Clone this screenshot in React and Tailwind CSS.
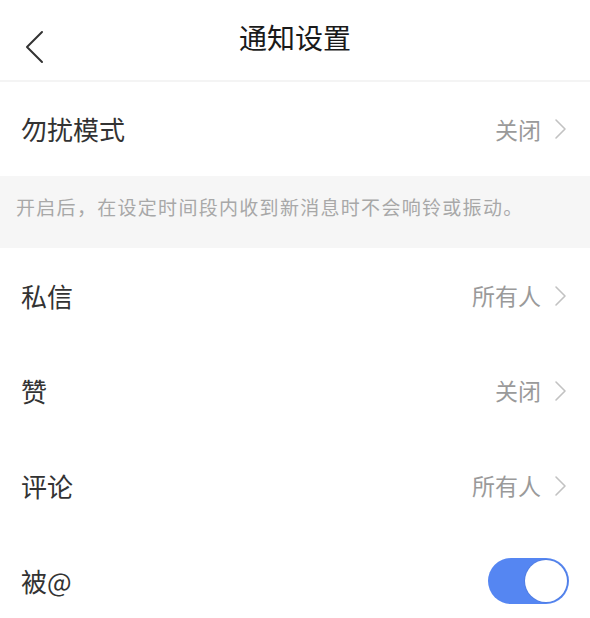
import React from "react";

const Chevron = () => (
  <svg width="14" height="22" viewBox="0 0 14 22" className="ml-[13px]">
    <path d="M2 2 L11 11 L2 20" fill="none" stroke="#c2c2c2" strokeWidth="1.6" strokeLinecap="round" strokeLinejoin="round" />
  </svg>
);

const Row = ({ label, value, children }) => (
  <div className="h-[95px] flex items-center justify-between pl-[21px] pr-[22px] bg-white">
    <span className="text-[26px] text-[#333] leading-none">{label}</span>
    {children ? (
      children
    ) : (
      <div className="flex items-center">
        <span className="text-[23px] text-[#9a9a9a] leading-none">{value}</span>
        <Chevron />
      </div>
    )}
  </div>
);

export default function App() {
  return (
    <div
      className="w-[590px] h-[618px] bg-white overflow-hidden"
      style={{ fontFamily: '"Noto Sans CJK SC", "Noto Sans", sans-serif' }}
    >
      <div className="h-[82px] relative flex items-center justify-center border-b-2 border-[#f4f4f4]">
        <svg width="22" height="34" viewBox="0 0 22 34" className="absolute left-[24px] top-[30px]">
          <path d="M18 2 L3 17 L18 32" fill="none" stroke="#333" strokeWidth="2" strokeLinecap="round" strokeLinejoin="round" />
        </svg>
        <span className="text-[28px] text-[#1a1a1a] leading-none -mt-[6px]">通知设置</span>
      </div>
      <div className="h-[94px] flex items-center justify-between pl-[21px] pr-[22px]">
        <span className="text-[26px] text-[#333] leading-none">勿扰模式</span>
        <div className="flex items-center">
          <span className="text-[23px] text-[#9a9a9a] leading-none">关闭</span>
          <Chevron />
        </div>
      </div>
      <div className="h-[72px] bg-[#f6f6f6] pl-[16px] pt-[19px]">
        <p className="text-[19px] tracking-[1.3px] text-[#a8a8a8] leading-[24px] whitespace-nowrap">
          开启后，在设定时间段内收到新消息时不会响铃或振动。
        </p>
      </div>
      <Row label="私信" value="所有人" />
      <Row label="赞" value="关闭" />
      <Row label="评论" value="所有人" />
      <Row label="被@">
        <div className="w-[81px] h-[46px] rounded-full bg-[#5586f2] flex items-center justify-end pr-[2px] -mr-[1px]">
          <div className="w-[42px] h-[42px] rounded-full bg-white shadow-[0_0_0_1px_rgba(0,0,0,0.06)]" />
        </div>
      </Row>
    </div>
  );
}
